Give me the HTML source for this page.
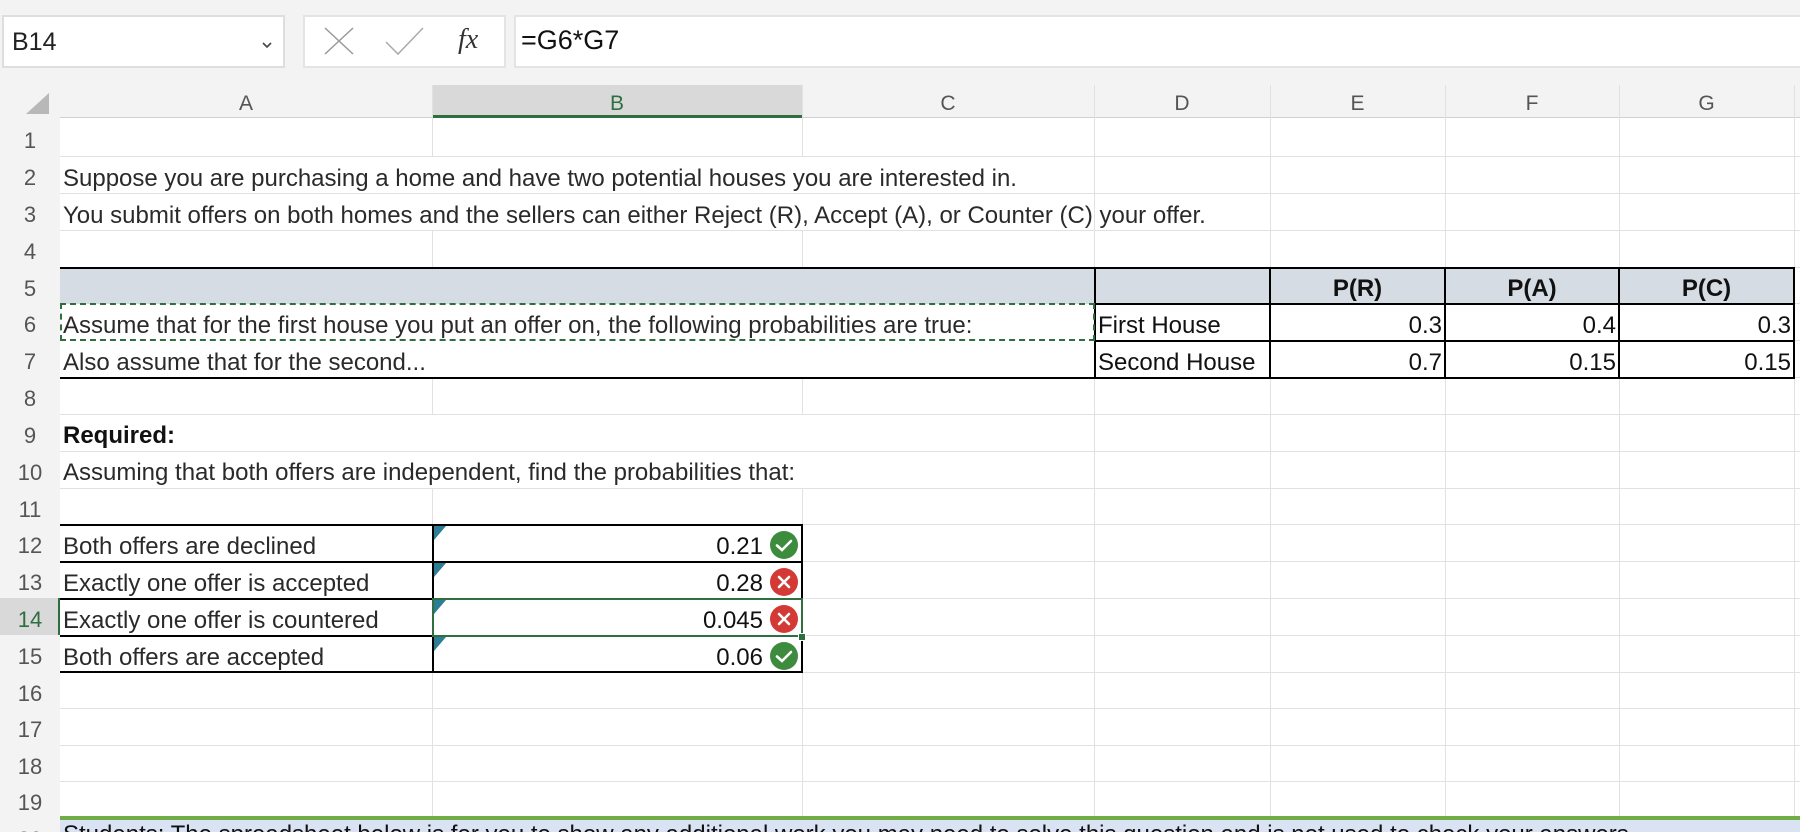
<!DOCTYPE html>
<html style="width:1800px;height:832px;overflow:hidden"><head><meta charset="utf-8">
<style>
*{margin:0;padding:0;box-sizing:border-box}
body{width:1800px;height:832px;overflow:hidden;background:#fff;font-family:"Liberation Sans",Arial,sans-serif;position:relative}
.a{position:absolute}
.t{position:absolute;font-size:24px;color:#2a2a2a;white-space:nowrap;line-height:44px}
.rh{position:absolute;left:0;width:60px;height:37px;font-size:22px;color:#555;text-align:center;line-height:44px;background:#f3f3f3;overflow:hidden}
.ch{position:absolute;top:85px;height:33px;font-size:21px;color:#555;text-align:center;line-height:38px}
.hl{position:absolute;height:1px;background:#e1e1e1;left:60px;right:0}
.vl{position:absolute;width:1px;background:#e1e1e1;top:85px;height:731px}
.bk{position:absolute;background:#000}
.w{position:absolute;background:#fff}
.tri{position:absolute;width:0;height:0;border-top:14px solid #2e7d96;border-right:12px solid transparent}
</style></head><body>
<div class="a" style="left:0;top:0;width:1800px;height:85px;background:#f3f3f3"></div>
<div class="a" style="left:2px;top:15px;width:283px;height:53px;background:#fff;border:2px solid #dedede"></div>
<div class="a" style="left:12px;top:28px;font-size:25px;color:#222">B14</div>
<svg class="a" style="left:261px;top:40px" width="12" height="10"><path d="M2 3 L6 7 L10 3" stroke="#444" stroke-width="1.6" fill="none"/></svg>
<div class="a" style="left:303px;top:15px;width:203px;height:53px;background:#fff;border:2px solid #e4e4e4"></div>
<svg class="a" style="left:320px;top:24px" width="40" height="34"><path d="M5 4 L33 30 M33 4 L5 30" stroke="#999" stroke-width="1.5" fill="none"/></svg>
<svg class="a" style="left:382px;top:24px" width="45" height="34"><path d="M4 18 L16 30 L41 4" stroke="#aaa" stroke-width="1.5" fill="none"/></svg>
<div class="a" style="left:458px;top:24px;font-family:'Liberation Serif',serif;font-style:italic;font-size:28px;color:#333">fx</div>
<div class="a" style="left:514px;top:15px;width:1290px;height:53px;background:#fff;border:2px solid #e4e4e4"></div>
<div class="a" style="left:521px;top:25px;font-size:27px;color:#111">=G6*G7</div>

<div class="a" style="left:0;top:85px;width:1800px;height:33px;background:#f3f3f3"></div>
<div class="a" style="left:0;top:118px;width:60px;height:714px;background:#f3f3f3"></div>
<svg class="a" style="left:20px;top:90px" width="32" height="26"><path d="M29 3 L29 24 L6 24 Z" fill="#b8b8b8"/></svg>
<div class="a" style="left:60px;top:117px;width:1740px;height:1px;background:#d0d0d0"></div>
<div class="ch" style="left:60px;width:372px">A</div>
<div class="ch" style="left:432px;width:370px;background:#d9d9d9;color:#2f6f3f;border-bottom:3px solid #2f6f3f">B</div>
<div class="ch" style="left:802px;width:292px">C</div>
<div class="ch" style="left:1094px;width:176px">D</div>
<div class="ch" style="left:1270px;width:175px">E</div>
<div class="ch" style="left:1445px;width:174px">F</div>
<div class="ch" style="left:1619px;width:175px">G</div>

<div class="vl" style="left:432px"></div><div class="vl" style="left:802px"></div>
<div class="vl" style="left:1094px"></div><div class="vl" style="left:1270px"></div>
<div class="vl" style="left:1445px"></div><div class="vl" style="left:1619px"></div>
<div class="vl" style="left:1794px;height:747px"></div>
<div class="hl" style="top:156px"></div><div class="hl" style="top:193px"></div>
<div class="hl" style="top:230px"></div><div class="hl" style="top:267px"></div>
<div class="hl" style="top:303px"></div><div class="hl" style="top:340px"></div>
<div class="hl" style="top:377px"></div><div class="hl" style="top:414px"></div>
<div class="hl" style="top:451px"></div><div class="hl" style="top:488px"></div>
<div class="hl" style="top:524px"></div><div class="hl" style="top:561px"></div>
<div class="hl" style="top:598px"></div><div class="hl" style="top:635px"></div>
<div class="hl" style="top:672px"></div><div class="hl" style="top:708px"></div>
<div class="hl" style="top:745px"></div><div class="hl" style="top:781px"></div>

<div class="w" style="left:61px;top:157px;width:1033px;height:36px"></div>
<div class="w" style="left:61px;top:194px;width:1033px;height:36px"></div>
<div class="w" style="left:61px;top:415px;width:1033px;height:36px"></div>
<div class="w" style="left:61px;top:452px;width:1033px;height:36px"></div>

<div class="rh" style="top:119px">1</div><div class="rh" style="top:156px">2</div>
<div class="rh" style="top:193px">3</div><div class="rh" style="top:230px">4</div>
<div class="rh" style="top:267px">5</div><div class="rh" style="top:303px">6</div>
<div class="rh" style="top:340px">7</div><div class="rh" style="top:377px">8</div>
<div class="rh" style="top:414px">9</div><div class="rh" style="top:451px">10</div>
<div class="rh" style="top:488px">11</div><div class="rh" style="top:524px">12</div>
<div class="rh" style="top:561px">13</div>
<div class="rh" style="top:598px;background:#d9d9d9;color:#2f6f3f">14</div>
<div class="rh" style="top:635px">15</div><div class="rh" style="top:672px">16</div>
<div class="rh" style="top:708px">17</div><div class="rh" style="top:745px">18</div>
<div class="rh" style="top:781px">19</div><div class="rh" style="top:818px;height:14px">20</div>
<div class="a" style="left:58px;top:598px;width:2px;height:37px;background:#2f6f3f"></div>

<div class="t" style="left:63px;top:157px">Suppose you are purchasing a home and have two potential houses you are interested in.</div>
<div class="t" style="left:63px;top:194px">You submit offers on both homes and the sellers can either Reject (R), Accept (A), or Counter (C) your offer.</div>

<div class="a" style="left:60px;top:267px;width:1734px;height:37px;background:#d6dce4"></div>
<div class="w" style="left:60px;top:304px;width:1734px;height:74px"></div>
<div class="bk" style="left:60px;top:267px;width:1735px;height:2px"></div>
<div class="bk" style="left:60px;top:377px;width:1735px;height:2px"></div>
<div class="bk" style="left:1094px;top:303px;width:701px;height:2px"></div>
<div class="bk" style="left:1094px;top:340px;width:701px;height:2px"></div>
<div class="bk" style="left:1094px;top:267px;width:2px;height:112px"></div>
<div class="bk" style="left:1269px;top:267px;width:2px;height:112px"></div>
<div class="bk" style="left:1444px;top:267px;width:2px;height:112px"></div>
<div class="bk" style="left:1618px;top:267px;width:2px;height:112px"></div>
<div class="bk" style="left:1793px;top:267px;width:2px;height:112px"></div>
<div class="a" style="left:60px;top:303px;width:1035px;height:38px;border:2px dashed #2f6f3f"></div>
<div class="t" style="left:1270px;width:175px;top:267px;text-align:center;font-weight:bold;color:#111">P(R)</div>
<div class="t" style="left:1445px;width:174px;top:267px;text-align:center;font-weight:bold;color:#111">P(A)</div>
<div class="t" style="left:1619px;width:175px;top:267px;text-align:center;font-weight:bold;color:#111">P(C)</div>
<div class="t" style="left:63px;top:304px">Assume that for the first house you put an offer on, the following probabilities are true:</div>
<div class="t" style="left:63px;top:341px">Also assume that for the second...</div>
<div class="t" style="left:1098px;top:304px;color:#111">First House</div>
<div class="t" style="left:1098px;top:341px;color:#111">Second House</div>
<div class="t" style="left:1270px;width:172px;top:304px;text-align:right;color:#111">0.3</div>
<div class="t" style="left:1445px;width:171px;top:304px;text-align:right;color:#111">0.4</div>
<div class="t" style="left:1619px;width:172px;top:304px;text-align:right;color:#111">0.3</div>
<div class="t" style="left:1270px;width:172px;top:341px;text-align:right;color:#111">0.7</div>
<div class="t" style="left:1445px;width:171px;top:341px;text-align:right;color:#111">0.15</div>
<div class="t" style="left:1619px;width:172px;top:341px;text-align:right;color:#111">0.15</div>

<div class="t" style="left:63px;top:414px;font-weight:bold;color:#111">Required:</div>
<div class="t" style="left:63px;top:451px">Assuming that both offers are independent, find the probabilities that:</div>

<div class="w" style="left:60px;top:525px;width:742px;height:148px"></div>
<div class="bk" style="left:60px;top:524px;width:743px;height:2px"></div>
<div class="bk" style="left:60px;top:561px;width:743px;height:2px"></div>
<div class="bk" style="left:60px;top:598px;width:743px;height:2px"></div>
<div class="bk" style="left:60px;top:635px;width:743px;height:2px"></div>
<div class="bk" style="left:60px;top:671px;width:743px;height:2px"></div>
<div class="bk" style="left:432px;top:524px;width:2px;height:149px"></div>
<div class="bk" style="left:801px;top:524px;width:2px;height:149px"></div>
<div class="t" style="left:63px;top:525px">Both offers are declined</div>
<div class="t" style="left:63px;top:562px">Exactly one offer is accepted</div>
<div class="t" style="left:63px;top:599px">Exactly one offer is countered</div>
<div class="t" style="left:63px;top:636px">Both offers are accepted</div>
<div class="tri" style="left:434px;top:526px"></div>
<div class="tri" style="left:434px;top:563px"></div>
<div class="tri" style="left:434px;top:600px"></div>
<div class="tri" style="left:434px;top:637px"></div>
<div class="t" style="left:600px;width:163px;top:525px;text-align:right;color:#111">0.21</div>
<div class="t" style="left:600px;width:163px;top:562px;text-align:right;color:#111">0.28</div>
<div class="t" style="left:600px;width:163px;top:599px;text-align:right;color:#111">0.045</div>
<div class="t" style="left:600px;width:163px;top:636px;text-align:right;color:#111">0.06</div>
<svg class="a" style="left:769px;top:530px" width="30" height="30"><circle cx="15" cy="15" r="14" fill="#3d8b3d"/><path d="M8 15.5 L13 20 L22 11" stroke="#fff" stroke-width="2.6" fill="none" stroke-linecap="round"/></svg>
<svg class="a" style="left:769px;top:567px" width="30" height="30"><circle cx="15" cy="15" r="14" fill="#d33a36"/><path d="M10 10 L20 20 M20 10 L10 20" stroke="#fff" stroke-width="2.6" stroke-linecap="round"/></svg>
<svg class="a" style="left:769px;top:604px" width="30" height="30"><circle cx="15" cy="15" r="14" fill="#d33a36"/><path d="M10 10 L20 20 M20 10 L10 20" stroke="#fff" stroke-width="2.6" stroke-linecap="round"/></svg>
<svg class="a" style="left:769px;top:641px" width="30" height="30"><circle cx="15" cy="15" r="14" fill="#3d8b3d"/><path d="M8 15.5 L13 20 L22 11" stroke="#fff" stroke-width="2.6" fill="none" stroke-linecap="round"/></svg>
<div class="a" style="left:432px;top:598px;width:371px;height:39px;border:2.5px solid #2f6f3f"></div>
<div class="a" style="left:798px;top:633px;width:8px;height:8px;background:#2f6f3f;border:1px solid #fff"></div>

<div class="a" style="left:60px;top:816px;width:1740px;height:4px;background:#70ad47"></div>
<div class="a" style="left:60px;top:820px;width:1740px;height:12px;background:#dae3f3;overflow:hidden">
<div class="t" style="left:3px;top:-7px;color:#111">Students: The spreadsheet below is for you to show any additional work you may need to solve this question and is not used to check your answers.</div></div>
</body></html>
